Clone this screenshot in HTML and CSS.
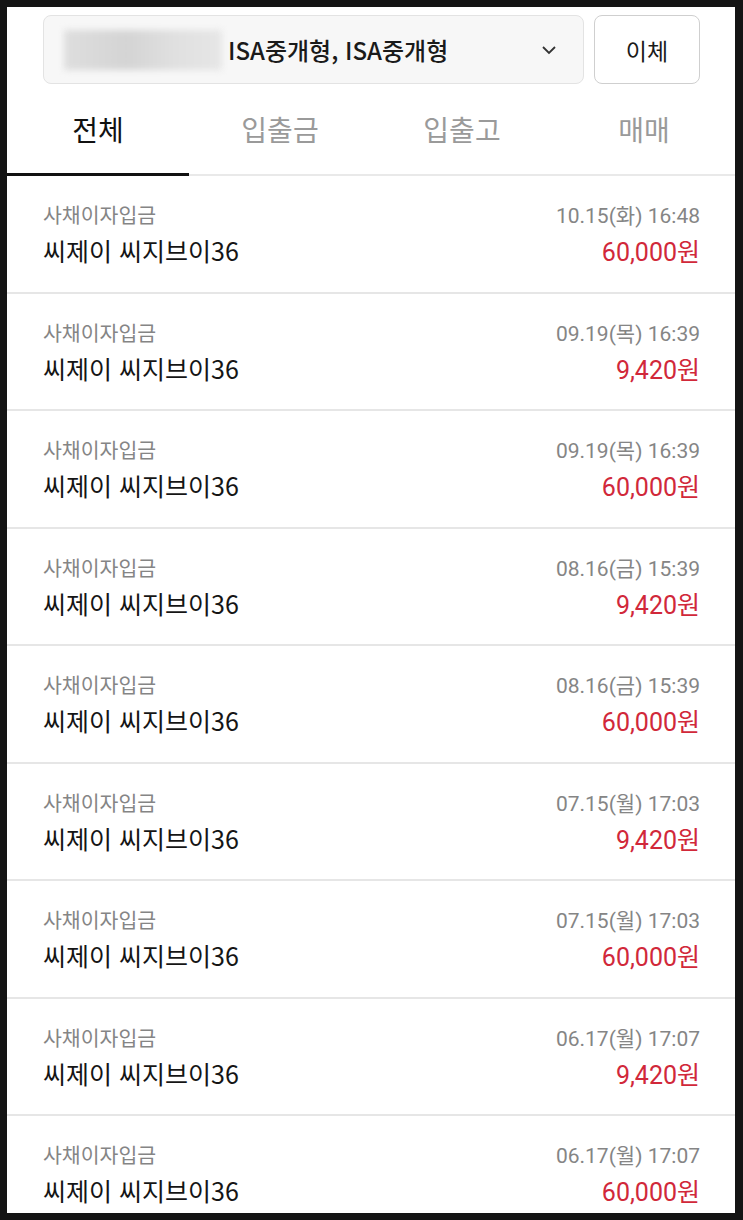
FILE: index.html
```html
<!DOCTYPE html>
<html lang="ko">
<head>
  <meta charset="UTF-8" />
  <meta name="viewport" content="width=device-width, initial-scale=1.0" />
  <title>거래내역</title>
  <link rel="stylesheet" href="styles.css">
</head>
<body>
  <div class="screen">
    <div class="top-bar">
      <div class="account-select">
        <span class="account-no"></span>
        <span class="account-name">ISA중개형, ISA중개형</span>
        <svg class="chevron" width="16" height="10" viewBox="0 0 16 10">
          <path d="M2 2 L8 8 L14 2" fill="none" stroke="#333" stroke-width="1.8" />
        </svg>
      </div>
      <button class="transfer-btn">이체</button>
    </div>

    <div class="tabs">
      <div class="tab active">전체</div>
      <div class="tab">입출금</div>
      <div class="tab">입출고</div>
      <div class="tab">매매</div>
    </div>

    <ul class="history">
      <li class="item">
        <span class="kind">사채이자입금</span>
        <span class="date">10.15(화) 16:48</span>
        <span class="name">씨제이 씨지브이36</span>
        <span class="amount">60,000원</span>
      </li>
      <li class="item">
        <span class="kind">사채이자입금</span>
        <span class="date">09.19(목) 16:39</span>
        <span class="name">씨제이 씨지브이36</span>
        <span class="amount">9,420원</span>
      </li>
      <li class="item">
        <span class="kind">사채이자입금</span>
        <span class="date">09.19(목) 16:39</span>
        <span class="name">씨제이 씨지브이36</span>
        <span class="amount">60,000원</span>
      </li>
      <li class="item">
        <span class="kind">사채이자입금</span>
        <span class="date">08.16(금) 15:39</span>
        <span class="name">씨제이 씨지브이36</span>
        <span class="amount">9,420원</span>
      </li>
      <li class="item">
        <span class="kind">사채이자입금</span>
        <span class="date">08.16(금) 15:39</span>
        <span class="name">씨제이 씨지브이36</span>
        <span class="amount">60,000원</span>
      </li>
      <li class="item">
        <span class="kind">사채이자입금</span>
        <span class="date">07.15(월) 17:03</span>
        <span class="name">씨제이 씨지브이36</span>
        <span class="amount">9,420원</span>
      </li>
      <li class="item">
        <span class="kind">사채이자입금</span>
        <span class="date">07.15(월) 17:03</span>
        <span class="name">씨제이 씨지브이36</span>
        <span class="amount">60,000원</span>
      </li>
      <li class="item">
        <span class="kind">사채이자입금</span>
        <span class="date">06.17(월) 17:07</span>
        <span class="name">씨제이 씨지브이36</span>
        <span class="amount">9,420원</span>
      </li>
      <li class="item">
        <span class="kind">사채이자입금</span>
        <span class="date">06.17(월) 17:07</span>
        <span class="name">씨제이 씨지브이36</span>
        <span class="amount">60,000원</span>
      </li>
    </ul>
  </div>
</body>
</html>
```

FILE: styles.css
```css
html, body {
  margin: 0;
  padding: 0;
  background-color: #141414;
}
body {
  font-family: "Noto Sans CJK KR", "Noto Sans", sans-serif;
  padding: 7px 8px 7px 7px;
}
.screen {
  background-color: #fff;
  height: 1206px;
  overflow: hidden;
}
.top-bar {
  display: flex;
  gap: 10px;
  padding: 8px 35px 0 36px;
}
.account-select {
  flex: 1;
  height: 67px;
  display: flex;
  align-items: center;
  background-color: #f7f7f7;
  border: 1px solid #e3e3e3;
  border-radius: 8px;
  padding: 0 26px 0 20px;
}
.account-no {
  width: 158px;
  height: 40px;
  background: linear-gradient(90deg, #dedede, #d4d4d4 40%, #e0e0e0 70%, #e6e6e6);
  filter: blur(3px);
  margin-right: 6px;
}
.account-name {
  flex: 1;
  font-size: 24px;
  font-weight: 500;
  color: #1a1a1a;
}
.chevron {
  display: block;
}
.transfer-btn {
  width: 106px;
  height: 69px;
  background-color: #fff;
  border: 1px solid #cfcfcf;
  border-radius: 8px;
  font-family: inherit;
  font-size: 23px;
  color: #1a1a1a;
  padding: 0;
}
.tabs {
  display: flex;
  height: 90px;
  border-bottom: 2px solid #e9e9e9;
}
.tab {
  flex: 1;
  display: flex;
  align-items: center;
  justify-content: center;
  font-size: 28px;
  color: #9a9a9a;
  box-sizing: border-box;
}
.tab.active {
  color: #111;
  border-bottom: 3px solid #111;
  margin-bottom: -2px;
}
.history {
  list-style: none;
  margin: 0;
  padding: 0;
}
.item {
  display: grid;
  grid-template-columns: 1fr auto;
  grid-template-rows: 26px 33px;
  row-gap: 7px;
  padding: 25px 35px 25px 36px;
  border-bottom: 2px solid #e6e6e6;
  height: 65.5px;
}
.kind, .date {
  font-size: 20.5px;
  line-height: 26px;
  color: #858585;
}
.date {
  text-align: right;
  font-family: Roboto, "Noto Sans CJK KR", sans-serif;
  font-size: 21px;
  padding-top: 2px;
}
.name, .amount {
  font-size: 25px;
  line-height: 33px;
  color: #151515;
}
.amount {
  text-align: right;
  font-family: Roboto, "Noto Sans CJK KR", sans-serif;
  color: #d1283a;
  padding-top: 2px;
}
```
